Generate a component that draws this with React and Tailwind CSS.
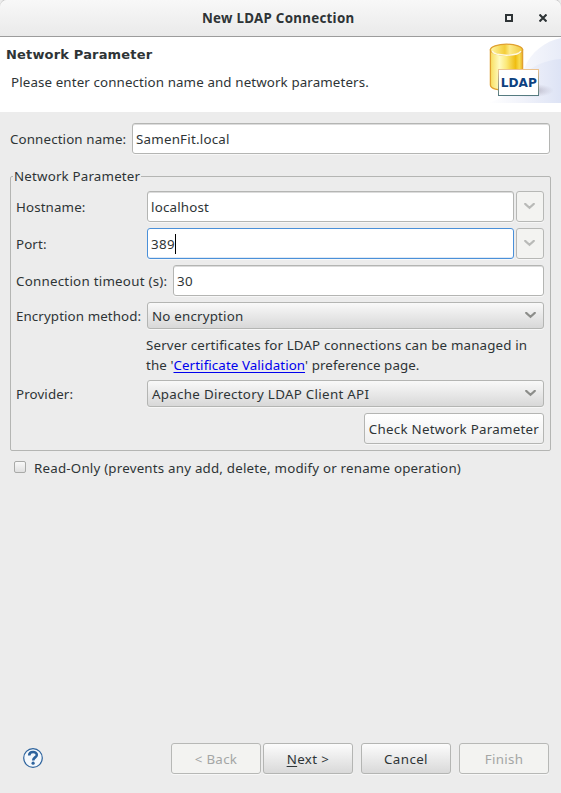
import React from "react";

const FIELD =
  "flex items-center h-[31px] rounded-[3px] border border-[#b4b5b3] bg-white pl-[3px] shadow-[0_1px_0_#f7f7f7,inset_0_1px_0_#dcdcdc]";
const BUTTON =
  "flex items-center justify-center h-[31px] rounded-[3px] border border-[#b4b5b3] bg-linear-to-b from-[#fcfcfc] to-[#d9d9d9] tracking-[0.4px] shadow-[0_1px_0_#f7f7f7]";
const DISABLED =
  "flex items-center justify-center h-[31px] rounded-[3px] border border-[#b7b8b6] bg-[#f3f3f1] tracking-[0.3px] text-[#a4a6a5] shadow-[0_1px_0_#f7f7f7]";

function Chevron({ color }) {
  return (
    <svg width="11" height="8" viewBox="0 0 11 8" fill="none" stroke={color} strokeWidth="2.2">
      <path d="M1.3 1V2L5.5 5.8L9.7 2V1" />
    </svg>
  );
}

function DropButton() {
  return (
    <button className="flex h-[31px] w-[28px] items-center justify-center rounded-[3px] border border-[#b7b8b6] bg-[#f3f3f1] pb-[2px] pr-[1px] shadow-[0_1px_0_#f7f7f7]">
      <Chevron color="#b9bab8" />
    </button>
  );
}

function Combo({ children }) {
  return (
    <div className="flex h-[27px] w-[397px] items-center justify-between rounded-[3px] border border-[#b4b5b3] bg-linear-to-b from-[#f9f9f9] to-[#d8d8d8] pl-[4px] pr-[7px] shadow-[0_1px_0_#f7f7f7]">
      {children}
      <span className="pb-[1px]">
        <Chevron color="#8c8d8a" />
      </span>
    </div>
  );
}

function Banner() {
  return (
    <svg width="73" height="66" viewBox="0 0 73 66" className="shrink-0">
      <defs>
        <linearGradient id="haze" x1="0" y1="0" x2="1" y2="0">
          <stop offset="0" stopColor="#fff" />
          <stop offset=".5" stopColor="#f0f2fa" />
          <stop offset="1" stopColor="#dde3f5" />
        </linearGradient>
        <linearGradient id="outer" x1="0" y1="0" x2="1" y2="0">
          <stop offset="0" stopColor="#fff" />
          <stop offset=".5" stopColor="#f6f7fc" />
          <stop offset="1" stopColor="#e8ecf8" />
        </linearGradient>
        <linearGradient id="drum" x1="0" y1="0" x2="1" y2="0">
          <stop offset="0" stopColor="#f8de5e" />
          <stop offset=".28" stopColor="#fffbc0" />
          <stop offset=".5" stopColor="#fbe878" />
          <stop offset=".78" stopColor="#efbd12" />
          <stop offset=".9" stopColor="#f8dc50" />
          <stop offset="1" stopColor="#e9b32a" />
        </linearGradient>
        <linearGradient id="lid" x1="0" y1="0" x2="1" y2="0">
          <stop offset="0" stopColor="#fff7a8" />
          <stop offset=".45" stopColor="#f4cd38" />
          <stop offset=".6" stopColor="#fdeb8a" />
          <stop offset="1" stopColor="#f1c93d" />
        </linearGradient>
        <linearGradient id="frame" x1="0" y1="0" x2="0" y2="1">
          <stop offset="0" stopColor="#ecc390" />
          <stop offset="1" stopColor="#557b80" />
        </linearGradient>
        <radialGradient id="shade">
          <stop offset="0" stopColor="#8a8496" stopOpacity=".7" />
          <stop offset="1" stopColor="#b0adc0" stopOpacity="0" />
        </radialGradient>
      </defs>
      <path d="M0 66C18 61 30 50 36 32C43 14 58 4 73 1V66Z" fill="url(#outer)" />
      <path d="M0 66C18 62 28 48 36 38C44 29 57 23 73 22V66Z" fill="url(#haze)" />
      <ellipse cx="42" cy="53.5" rx="24" ry="7" fill="url(#shade)" />
      <path d="M2.4 13V48C2.4 55.5 34.6 55.5 34.6 48V13Z" fill="url(#drum)" stroke="#e0a030" strokeWidth="1.3" />
      <ellipse cx="18.5" cy="12.8" rx="16.1" ry="5.6" fill="url(#lid)" stroke="#e0a030" strokeWidth="1.3" />
      <path d="M4 14.2C7 19.5 30 19.5 33 14.2" fill="none" stroke="#fffbe0" strokeWidth="1.5" />
      <rect x="10.5" y="32.5" width="40" height="26" fill="#fff" stroke="url(#frame)" />
      <text x="12.8" y="50" fontFamily="DejaVu Sans" fontWeight="700" fontSize="13" textLength="36" lengthAdjust="spacingAndGlyphs" fill="#0d4180">
        LDAP
      </text>
    </svg>
  );
}

export default function App() {
  return (
    <div className="flex h-[793px] w-[561px] flex-col bg-[#ececec] font-['Noto_Sans','Open_Sans',sans-serif] text-[13.33px] leading-[20px] text-[#2e3436]">
      <header className="flex h-[37px] shrink-0 items-center justify-between rounded-t-[7px] border-b border-[#9c9c9c] bg-linear-to-b from-[#f8f8f8] to-[#eaeaea] pr-[14px] shadow-[0_-1px_0_#c8c8c8]">
        <h1 className="pl-[202px] font-bold tracking-[0.28px]">New LDAP Connection</h1>
        <div className="flex shrink-0 items-center gap-[26px]">
          <span className="size-[8px] shrink-0 border-2 border-[#2e3436]" />
          <svg width="8" height="8" viewBox="0 0 8 8" stroke="#2e3436" strokeWidth="2.1">
            <path d="M.5 .5L7.5 7.5M7.5 .5L.5 7.5" />
          </svg>
        </div>
      </header>

      <section className="flex h-[75px] shrink-0 justify-between bg-white">
        <div className="pl-[6px] pt-[8px]">
          <h2 className="font-['DejaVu_Sans',sans-serif] text-[13px] font-bold tracking-[0.17px]">
            Network Parameter
          </h2>
          <p className="pl-[5px] pt-[7px] tracking-[0.12px]">
            Please enter connection name and network parameters.
          </p>
        </div>
        <Banner />
      </section>

      <main className="flex flex-col pl-[10px] pr-[10px] pt-[11px]">
        <div className="flex items-center pr-[1px]">
          <label className="w-[122px] shrink-0 tracking-[0.13px]">Connection name:</label>
          <div className={FIELD + " grow tracking-[0.22px]"}>SamenFit.local</div>
        </div>

        <fieldset className="mt-[12px] h-[285px] w-[541px] rounded-[2px] border border-[#b4b5b3] pl-[5px] pt-[4px]">
          <legend className="-ml-[3px] h-[21px] px-px tracking-[0.18px]">Network Parameter</legend>
          <div className="flex items-center">
            <label className="w-[131px] tracking-[0.12px]">Hostname:</label>
            <div className={FIELD + " mr-[2px] w-[367px] tracking-[0.2px]"}>localhost</div>
            <DropButton />
          </div>
          <div className="mt-[6px] flex items-center">
            <label className="w-[131px] tracking-[0.12px]">Port:</label>
            <div className="mr-[2px] flex h-[31px] w-[367px] items-center rounded-[3px] border border-[#4a90d9] bg-white pl-[3px] tracking-[0.4px] shadow-[0_1px_0_#f7f7f7,inset_0_-1px_0_#dfe9f5]">
              389
              <span className="h-[20px] w-px bg-black" />
            </div>
            <DropButton />
          </div>
          <div className="mt-[6px] flex items-center">
            <label className="w-[157px] tracking-[0.25px]">Connection timeout (s):</label>
            <div className={FIELD + " w-[371px] tracking-[0.4px]"}>30</div>
          </div>
          <div className="mt-[6px] flex items-center">
            <label className="w-[131px] tracking-[0.1px]">Encryption method:</label>
            <Combo><span className="tracking-[0.2px]">No encryption</span></Combo>
          </div>
          <p className="ml-[130px] mt-[6px] h-[40px] whitespace-nowrap">
            <span className="tracking-[0.155px]">Server certificates for LDAP connections can be managed in</span>
            <br />
            <span className="tracking-[0.09px]">
              the '<a className="text-[#0000ee] underline underline-offset-2">Certificate Validation</a>' preference page.
            </span>
          </p>
          <div className="mt-[5px] flex items-center">
            <label className="w-[131px] tracking-[0.12px]">Provider:</label>
            <Combo><span className="tracking-[0.3px]">Apache Directory LDAP Client API</span></Combo>
          </div>
          <button className="ml-[348px] mt-[6px] flex h-[31px] w-[180px] items-center justify-center whitespace-nowrap rounded-[3px] border border-[#b4b5b3] bg-linear-to-b from-[#ffffff] to-[#eeeeee] tracking-[0.26px] shadow-[0_1px_0_#f7f7f7]">
            Check Network Parameter
          </button>
        </fieldset>

        <label className="ml-[4px] mt-[7px] flex items-center tracking-[0.205px]">
          <span className="mb-[2px] mr-[8px] size-[12px] rounded-[2px] border border-[#a9aaa8] bg-linear-to-b from-[#f9f9f9] to-[#e0e0e0]" />
          Read-Only (prevents any add, delete, modify or rename operation)
        </label>
      </main>

      <footer className="mb-[19px] mt-auto flex items-center pl-[23px]">
        <svg width="20" height="20" viewBox="0 0 20 20" className="mb-[2px] mr-[128px]">
          <circle cx="10" cy="10" r="9.3" fill="#f4f8fc" stroke="#2d639d" strokeWidth="1.2" />
          <path d="M6.2 7.4C6.2 3 14 3 13.8 7C13.7 9.4 10.2 9.5 10.2 12.4" fill="none" stroke="#2d639d" strokeWidth="2.6" />
          <circle cx="10.1" cy="15.2" r="1.6" fill="#2d639d" />
        </svg>
        <button className={DISABLED + " w-[90px]"}>&lt; Back</button>
        <button className={BUTTON + " ml-[2px] w-[90px]"}>
          <span><span className="underline underline-offset-2">N</span>ext &gt;</span>
        </button>
        <button className={BUTTON + " ml-[8px] w-[90px]"}>Cancel</button>
        <button className={DISABLED + " ml-[8px] w-[90px]"}>Finish</button>
      </footer>
    </div>
  );
}
